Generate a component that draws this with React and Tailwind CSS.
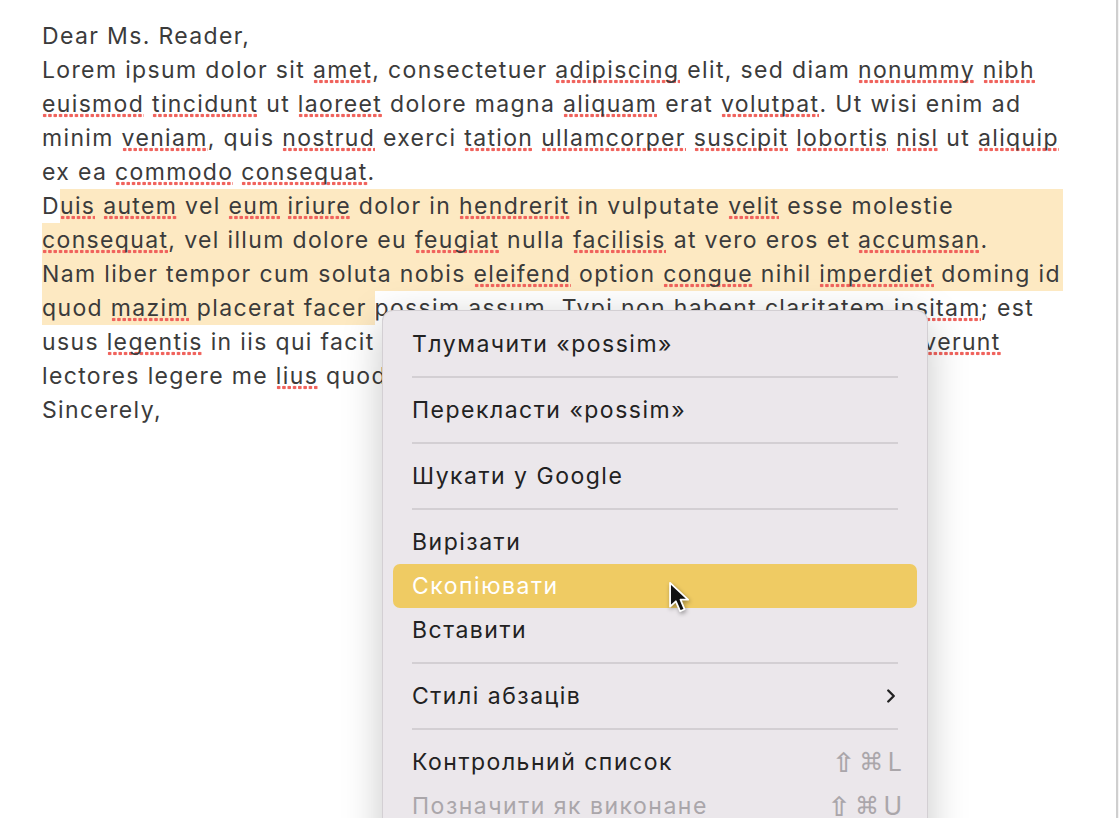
import React from 'react';
import { ChevronRight } from 'lucide-react';

// red dotted spell-check underline
const Sp = ({ children }) => (
  <span className="bg-[radial-gradient(circle,#f0625c_1.6px,transparent_2.1px)] bg-[length:5.3px_5px] bg-repeat-x bg-[position:0_100%]">
    {children}
  </span>
);

const Line = ({ children, className = '' }) => (
  <div className={`h-[34px] whitespace-nowrap ${className}`}>{children}</div>
);

const Sep = () => (
  <div className="h-[22px] flex items-center px-[29px]">
    <div className="h-[1.5px] w-full bg-[#d3cfd3]" />
  </div>
);

const Item = ({ label, right, active, muted }) => (
  <div className={`h-[44px] flex items-center justify-between rounded-[7px] mx-[10px] px-[19px]
    ${active ? 'bg-[#efcb63] text-white' : muted ? 'text-[#aaa6aa]' : 'text-[#222]'}`}>
    <span>{label}</span>
    {right}
  </div>
);

const Keys = ({ k }) => (
  <span className="flex items-center gap-[3px] text-[#aaa6aa] -mr-[4px]">
    <span className="text-[27px] leading-none font-bold" style={{ fontFamily: "'DejaVu Sans', sans-serif" }}>⇧</span>
    <span className="text-[24px] leading-none" style={{ fontFamily: "'DejaVu Sans', sans-serif" }}>⌘</span>
    <span className="text-[25px] leading-none tracking-normal">{k}</span>
  </span>
);

export default function App() {
  return (
    <div className="relative h-[818px] w-[1119px] overflow-hidden bg-white"
      style={{ fontFamily: "Inter, 'Noto Sans', 'DejaVu Sans', sans-serif" }}>

      {/* ── document text ─────────────────────────────────── */}
      <div className="pt-[19px] pl-[42px] w-[1063px] text-[23px] tracking-[1.35px] leading-[34px] text-[#3b3b3b]">
        <Line>Dear Ms. Reader,</Line>
        <Line>Lorem ipsum dolor sit <Sp>amet</Sp>, consectetuer <Sp>adipiscing</Sp> elit, sed diam <Sp>nonummy</Sp> <Sp>nibh</Sp></Line>
        <Line><Sp>euismod</Sp> <Sp>tincidunt</Sp> ut <Sp>laoreet</Sp> dolore magna <Sp>aliquam</Sp> erat <Sp>volutpat</Sp>. Ut wisi enim ad</Line>
        <Line>minim <Sp>veniam</Sp>, quis <Sp>nostrud</Sp> exerci <Sp>tation</Sp> <Sp>ullamcorper</Sp> <Sp>suscipit</Sp> <Sp>lobortis</Sp> <Sp>nisl</Sp> ut <Sp>aliquip</Sp></Line>
        <Line>ex ea <Sp>commodo</Sp> <Sp>consequat</Sp>.</Line>
        <Line className="flex">
          <span>D</span>
          <span className="flex-1 bg-[#fde9c2]"><Sp>uis</Sp> <Sp>autem</Sp> vel <Sp>eum</Sp> <Sp>iriure</Sp> dolor in <Sp>hendrerit</Sp> in vulputate <Sp>velit</Sp> esse molestie</span>
        </Line>
        <Line className="bg-[#fde9c2]"><Sp>consequat</Sp>, vel illum dolore eu <Sp>feugiat</Sp> nulla <Sp>facilisis</Sp> at vero eros et <Sp>accumsan</Sp>.</Line>
        <Line className="bg-[#fde9c2]">Nam liber tempor cum soluta nobis <Sp>eleifend</Sp> option <Sp>congue</Sp> nihil <Sp>imperdiet</Sp> doming id</Line>
        <Line>
          <span className="inline-block h-[34px] bg-[#fde9c2]">quod <Sp>mazim</Sp> placerat facer&nbsp;</span>possim assum. Typi non habent claritatem <Sp>insitam</Sp>; est
        </Line>
        <Line>usus <Sp>legentis</Sp> in iis qui facit <Sp>eorum</Sp> claritatem. Investigationes <Sp>demonstraverunt</Sp></Line>
        <Line>lectores legere me <Sp>lius</Sp> quod ii legunt saepius.</Line>
        <Line>Sincerely,</Line>
      </div>

      {/* ── right ruler edge ──────────────────────────────── */}
      <div className="absolute top-0 right-0 h-full w-[3px] border-l-2 border-[#cfcfcf] bg-[#f4f4f4]" />

      {/* ── context menu ──────────────────────────────────── */}
      <div className="absolute left-[382px] top-[310px] w-[546px] h-[560px] pt-[11px] rounded-[11px] bg-[#ebe7eb]
                      border border-black/10 shadow-[0_10px_40px_rgba(0,0,0,0.22)] text-[23px] tracking-[1.5px]">
        <Item label="Тлумачити «possim»" />
        <Sep />
        <Item label="Перекласти «possim»" />
        <Sep />
        <Item label="Шукати у Google" />
        <Sep />
        <Item label="Вирізати" />
        <Item label="Скопіювати" active />
        <Item label="Вставити" />
        <Sep />
        <Item label="Стилі абзаців" right={<ChevronRight size={22} strokeWidth={2.6} className="text-[#222] -mr-[4px]" />} />
        <Sep />
        <Item label="Контрольний список" right={<Keys k="L" />} />
        <Item label="Позначити як виконане" muted right={<Keys k="U" />} />
      </div>

      {/* ── mouse pointer ─────────────────────────────────── */}
      <svg className="absolute left-[668px] top-[581px] drop-shadow-[1px_2px_2px_rgba(0,0,0,0.35)]" width="26" height="36" viewBox="0 0 20 28">
        <path d="M1.5 1.5 L1.5 20 L6 15.8 L9.3 23.5 L12.8 22 L9.6 14.5 L15.5 14.5 Z"
          fill="#111" stroke="#fff" strokeWidth="1.4" strokeLinejoin="round" />
      </svg>
    </div>
  );
}
